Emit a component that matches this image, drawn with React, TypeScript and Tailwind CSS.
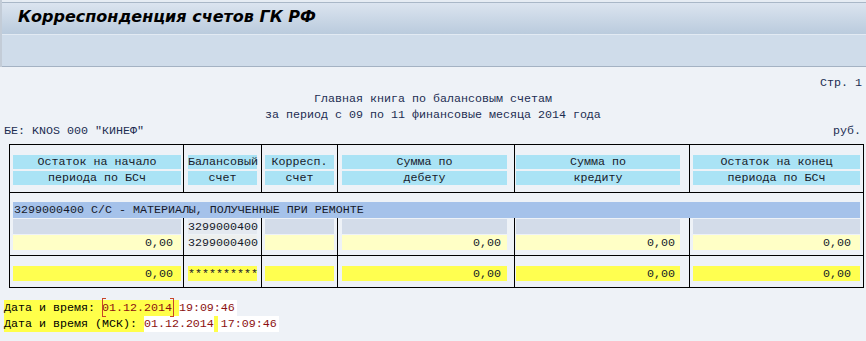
const mono = "font-['Liberation_Mono','Courier_New',monospace] text-[11.67px]";

type Col = {
  bar: string;
  pr: string;
  h1: string;
  h2: string;
};

const cols: Col[] = [
  { bar: "ml-[3px] mr-[2px]", pr: "pr-[8px]", h1: "Остаток на начало", h2: "периода по БСч" },
  { bar: "ml-[4px] mr-[4px]", pr: "pr-0", h1: "Балансовый", h2: "счет" },
  { bar: "ml-[3px] mr-[3px]", pr: "pr-0", h1: "Корресп.", h2: "счет" },
  { bar: "ml-[4px] mr-[7px]", pr: "pr-[6px]", h1: "Сумма по", h2: "дебету" },
  { bar: "ml-[1px] mr-[9px]", pr: "pr-[5px]", h1: "Сумма по", h2: "кредиту" },
  { bar: "ml-[3px] mr-[3px]", pr: "pr-[9px]", h1: "Остаток на конец", h2: "периода по БСч" },
];

const grid = "grid grid-cols-[173px_78px_76px_177px_175px_174px]";

function cellBorder(i: number) {
  return i === 0 ? "" : "border-l border-black";
}

function Bar({ col, bg, text, align }: { col: Col; bg: string; text?: string; align: "left" | "right" }) {
  return (
    <div
      className={`${col.bar} ${bg} h-[15px] leading-[16px] whitespace-pre text-[#161a2a] ${
        align === "right" ? `text-right ${col.pr}` : "text-left"
      }`}
    >
      {text ?? ""}
    </div>
  );
}

function ReportTable() {
  return (
    <div className={`ml-[9px] mt-[5px] w-[855px] border border-black ${mono}`}>
      {/* header */}
      <div className={`${grid} border-b border-black`}>
        {cols.map((c, i) => (
          <div key={i} className={`${cellBorder(i)} pt-[10px] pb-[7px]`}>
            <div className={`${c.bar} h-[14px] bg-[#aae3f5] text-center leading-[15px] text-[#161a2a]`}>{c.h1}</div>
            <div className={`${c.bar} mt-[2px] h-[14px] bg-[#aae3f5] text-center leading-[15px] text-[#161a2a]`}>{c.h2}</div>
          </div>
        ))}
      </div>

      {/* body */}
      <div className="border-b border-black">
        <div className="pt-[9px]">
          <div className="mx-[3px] h-[16px] bg-[#a5c2ea] pl-[1px] leading-[17px] text-[#161a2a]">
            3299000400 С/С - МАТЕРИАЛЫ, ПОЛУЧЕННЫЕ ПРИ РЕМОНТЕ
          </div>
        </div>
        <div className={grid}>
          {cols.map((c, i) => (
            <div key={i} className={`${cellBorder(i)} pt-[1px] pb-[5px]`}>
              <Bar
                col={c}
                bg={i === 1 ? "bg-[#e4e9f0]" : "bg-[#d3dce9]"}
                text={i === 1 ? "3299000400" : ""}
                align="left"
              />
              <div className="mt-[1px]">
                {i === 1 ? (
                  <Bar col={c} bg="bg-[#eef0ee]" text="3299000400" align="left" />
                ) : (
                  <Bar col={c} bg="bg-[#ffffc6]" text={i === 2 ? "" : "0,00"} align="right" />
                )}
              </div>
            </div>
          ))}
        </div>
      </div>

      {/* totals */}
      <div className={grid}>
        {cols.map((c, i) => (
          <div key={i} className={`${cellBorder(i)} pt-[10px] pb-[6px]`}>
            {i === 1 ? (
              <Bar col={c} bg="bg-[#ffff50]" text="**********" align="left" />
            ) : (
              <Bar col={c} bg="bg-[#ffff50]" text={i === 2 ? "" : "0,00"} align="right" />
            )}
          </div>
        ))}
      </div>
    </div>
  );
}

function Footer() {
  return (
    <div className={`mt-[12px] pl-[4px] leading-[16px] ${mono}`}>
      <div className="flex h-[16px]">
        <span className="whitespace-pre bg-[#ffff4a] text-black">Дата и время: </span>
        <span className="relative bg-[#ffff4a] text-[#8c1010]">
          01.12.2014
          <span className="absolute -top-[2px] left-0 h-[19px] w-[4px] border-y border-l border-[#c8452a]" />
          <span className="absolute -top-[2px] -right-[2px] h-[19px] w-[4px] border-y border-r border-[#c8452a]" />
        </span>
        <span className="whitespace-pre bg-[#ffff4a]"> </span>
        <span className="bg-white pr-[2px] text-[#8c1010]">19:09:46</span>
      </div>
      <div className="flex h-[16px]">
        <span className="whitespace-pre bg-[#ffff4a] text-black">Дата и время (МСК): </span>
        <span className="bg-white text-[#8c1010]">01.12.2014</span>
        <span className="w-[4px] bg-[#ffff4a]" />
        <span className="bg-white pl-[3px] pr-[2px] text-[#8c1010]">17:09:46</span>
      </div>
    </div>
  );
}

export default function App() {
  return (
    <div className="h-[341px] w-[866px] overflow-hidden bg-[#eef2f7]">
      <div className="border-l-2 border-[#c3ccd7]">
        <div className="h-[3px] border-b border-[#a9b7c7] bg-[#e6ecf3]" />
        <div className="flex h-[31px] items-center bg-gradient-to-b from-[#dbe4ef] to-[#bacbdd] pb-[3px] pl-[16px]">
          <span className="font-['DejaVu_Sans',Verdana,sans-serif] text-[16px] font-bold italic text-black">
            Корреспонденция счетов ГК РФ
          </span>
        </div>
        <div className="h-[33px] border-t border-b border-t-[#e2eaf3] border-b-[#a4b2c3] bg-[#cfdcea]" />
      </div>

      <div className={`px-[4px] pt-[8px] leading-[16px] text-[#1c2d52] ${mono}`}>
        <div className="text-right">Стр. 1</div>
        <div className="text-center">Главная книга по балансовым счетам</div>
        <div className="text-center">за период с 09 по 11 финансовые месяца 2014 года</div>
        <div className="flex justify-between">
          <span>БЕ: KNOS 000 "КИНЕФ"</span>
          <span className="pr-[1px]">руб.</span>
        </div>
      </div>

      <ReportTable />
      <Footer />
    </div>
  );
}
